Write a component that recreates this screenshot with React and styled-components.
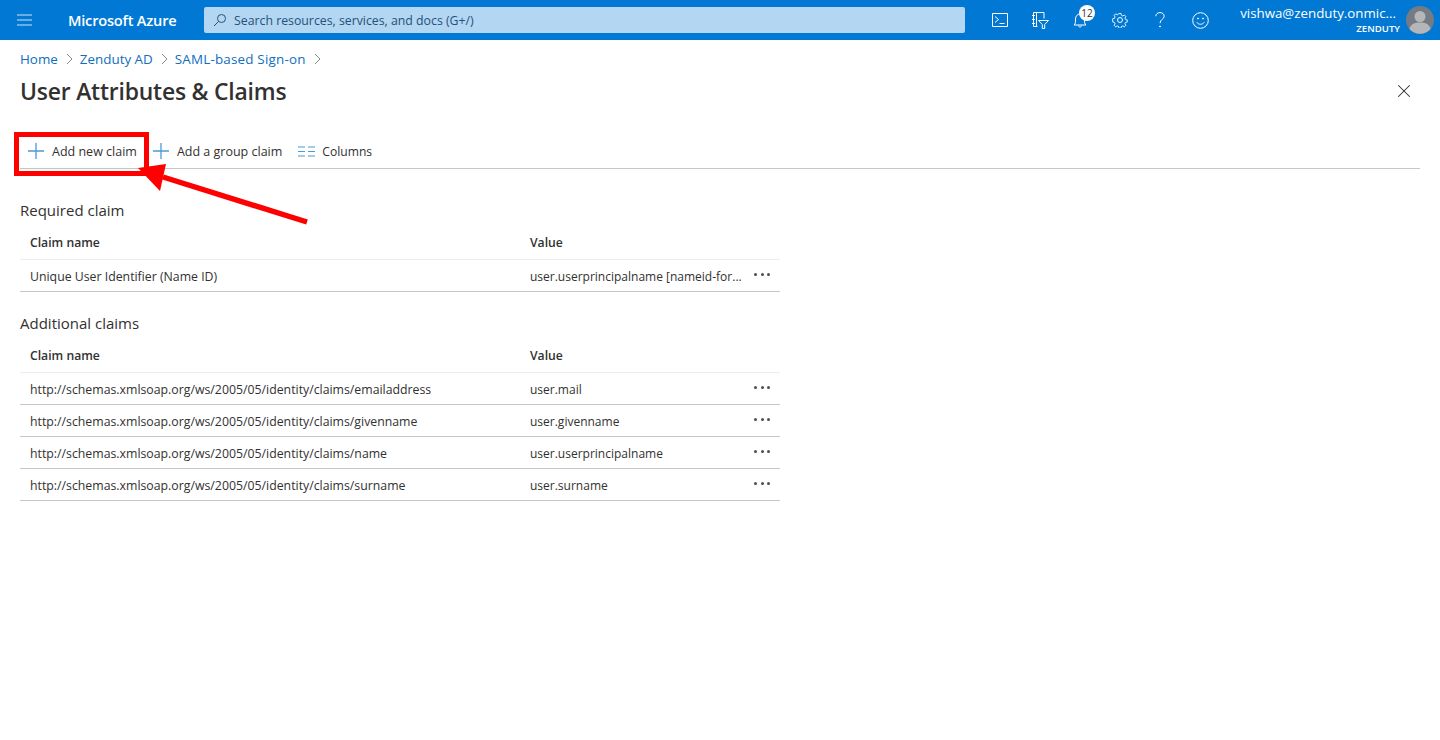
import styled, { createGlobalStyle } from "styled-components";
import { X } from "lucide-react";

const GlobalStyle = createGlobalStyle`
  html, body {
    margin: 0;
    padding: 0;
    background: #fff;
    font-family: "Open Sans", "Noto Sans", "Liberation Sans", sans-serif;
    color: #323130;
  }
`;

const Page = styled.div`
  position: relative;
  width: 1440px;
  height: 740px;
  overflow: hidden;
`;

const TopBar = styled.header`
  display: flex;
  align-items: center;
  height: 40px;
  background: #0078d4;
  color: #fff;
`;

const MenuButton = styled.div`
  display: flex;
  justify-content: center;
  width: 49px;
`;

const Brand = styled.div`
  width: 136px;
  padding-left: 19px;
  box-sizing: border-box;
  font-size: 14.6px;
  font-weight: 600;
  letter-spacing: -0.2px;
  white-space: nowrap;
`;

const SearchBox = styled.div`
  display: flex;
  align-items: center;
  gap: 7px;
  width: 761px;
  height: 26px;
  margin-left: 19px;
  padding-left: 9px;
  box-sizing: border-box;
  background: #b3d6f2;
  border-radius: 2px;
  color: #24527a;
  font-size: 12.3px;
`;

const IconRow = styled.div`
  display: flex;
  margin-left: 15px;
`;

const IconCell = styled.div`
  position: relative;
  display: flex;
  align-items: center;
  justify-content: center;
  width: 40px;
  height: 40px;
`;

const Badge = styled.span`
  position: absolute;
  top: 5px;
  left: 19px;
  width: 16px;
  height: 16px;
  border-radius: 50%;
  background: #fff;
  color: #323130;
  font-size: 10px;
  line-height: 16px;
  text-align: center;
`;

const Account = styled.div`
  display: flex;
  flex-direction: column;
  align-items: flex-end;
  width: 171px;
  margin-left: 10px;
  padding-top: 1px;
`;

const AccountName = styled.div`
  padding-right: 5px;
  font-size: 13.3px;
  line-height: 17px;
  white-space: nowrap;
`;

const Tenant = styled.div`
  padding-right: 1px;
  font-size: 9.6px;
  font-weight: 600;
  line-height: 14px;
`;

const Avatar = styled.div`
  margin-left: 5px;
  width: 28px;
  height: 28px;
`;

const Content = styled.main`
  padding: 0 20px;
`;

const Breadcrumb = styled.nav`
  display: flex;
  align-items: center;
  height: 38px;
  font-size: 13.4px;
  color: #106ebe;
`;

const Crumb = styled.span`
  letter-spacing: ${(p) => p.$track || 0}px;
  white-space: nowrap;
`;

const Chevron = styled.svg`
  width: 8px;
  height: 10px;
  margin: 0 7px;
  fill: none;
  stroke: #8a8886;
  stroke-width: 1;
`;

const TitleRow = styled.div`
  display: flex;
  align-items: center;
  justify-content: space-between;
  height: 30px;
  margin-top: -2px;
  padding-right: 5px;
`;

const Title = styled.h1`
  margin: 0;
  font-size: 22.9px;
  font-weight: 600;
  letter-spacing: -0.2px;
  color: #323130;
`;

const Toolbar = styled.div`
  display: flex;
  align-items: center;
  height: 34px;
  margin-top: 28px;
  padding: 0 0 0 8px;
  border-bottom: 1px solid #c8c6c4;
`;

const ToolButton = styled.div`
  display: flex;
  align-items: center;
  gap: ${(p) => p.$gap || 8}px;
  margin-right: ${(p) => p.$after || 0}px;
  font-size: ${(p) => p.$size || 12.5}px;
  color: #323130;
  white-space: nowrap;
`;

const Section = styled.section`
  width: 760px;
  margin-top: ${(p) => p.$top}px;
`;

const SectionTitle = styled.h2`
  margin: 0;
  height: 20px;
  font-size: 15px;
  line-height: 20px;
  font-weight: 400;
  color: #323130;
`;

const HeaderRow = styled.div`
  display: grid;
  grid-template-columns: 500px 260px;
  align-items: center;
  height: 34px;
  margin-top: 5px;
  padding-left: 10px;
  border-bottom: 1px solid #edebe9;
  font-size: 12.2px;
  font-weight: 600;
`;

const Row = styled.div`
  display: grid;
  grid-template-columns: 500px 214px 1fr;
  align-items: center;
  height: 31px;
  padding-left: 10px;
  border-bottom: 1px solid #c8c6c4;
  white-space: nowrap;
`;

const Cell = styled.div`
  padding-top: 2px;
  font-size: ${(p) => p.$size}px;
  white-space: nowrap;
`;

const More = styled.div`
  display: flex;
  gap: 3.5px;
  margin: -2px 0 0 10px;
`;

const Dot = styled.span`
  width: 3px;
  height: 3px;
  border-radius: 50%;
  background: #504e4c;
`;

const Annotation = styled.div`
  position: absolute;
  top: 132px;
  left: 14px;
  width: 135px;
  height: 44px;
  box-sizing: border-box;
  border: 5px solid #fe0000;
`;

const ArrowSvg = styled.svg`
  position: absolute;
  top: 160px;
  left: 130px;
  width: 190px;
  height: 75px;
`;

const requiredRows = [
  ["Unique User Identifier (Name ID)", "user.userprincipalname [nameid-for..."],
];

const additionalRows = [
  ["http://schemas.xmlsoap.org/ws/2005/05/identity/claims/emailaddress", "user.mail"],
  ["http://schemas.xmlsoap.org/ws/2005/05/identity/claims/givenname", "user.givenname"],
  ["http://schemas.xmlsoap.org/ws/2005/05/identity/claims/name", "user.userprincipalname"],
  ["http://schemas.xmlsoap.org/ws/2005/05/identity/claims/surname", "user.surname"],
];

const Plus = () => (
  <svg width="16" height="16" viewBox="0 0 16 16" stroke="#4a9ad4" strokeWidth="1.3">
    <path d="M8 0v16M0 8h16" />
  </svg>
);

const ClaimsTable = ({ rows }) => (
  <>
    <HeaderRow>
      <span>Claim name</span>
      <span>Value</span>
    </HeaderRow>
    {rows.map(([name, value]) => (
      <Row key={name}>
        <Cell $size={12.3}>{name}</Cell>
        <Cell $size={12}>{value}</Cell>
        <More>
          <Dot />
          <Dot />
          <Dot />
        </More>
      </Row>
    ))}
  </>
);

export default function App() {
  return (
    <Page>
      <GlobalStyle />
      <TopBar>
        <MenuButton>
          <svg width="15" height="12" viewBox="0 0 15 12" stroke="#cfe4f6" strokeWidth="1.2">
            <path d="M0 1h15M0 6h15M0 11h15" />
          </svg>
        </MenuButton>
        <Brand>Microsoft Azure</Brand>
        <SearchBox>
          <svg width="14" height="14" viewBox="0 0 14 14" fill="none" stroke="#24527a" strokeWidth="1">
            <circle cx="8.5" cy="5.5" r="4" />
            <path d="M5.5 8.5L1 13" />
          </svg>
          Search resources, services, and docs (G+/)
        </SearchBox>
        <IconRow>
          <IconCell>
            <svg width="16" height="14" viewBox="0 0 16 14" fill="none" stroke="#fff" strokeWidth="1">
              <path d="M.5.5h15v13H.5zM3 3.5l3.5 3-3.5 3M7.5 10.500h5" />
            </svg>
          </IconCell>
          <IconCell>
            <svg width="18" height="17" viewBox="0 0 18 17" fill="none" stroke="#fff" strokeWidth="1">
              <path d="M2.500.5h10.500v6M6.500 14.500h-4V.5M5.500.5v14M1 3.500h3M1 7.500h3M1 11.500h3M7.500 8.500h10l-3.800 4v4h-2.400v-4z" />
            </svg>
          </IconCell>
          <IconCell>
            <svg width="14" height="16" viewBox="0 0 14 16" fill="none" stroke="#fff" strokeWidth="1">
              <path d="M1 13c1.500-1 1.500-3 1.500-6S4.500 2 7 2s4.500 2 4.500 5 0 5 1.500 6zM5.500 13.500c0 2 3 2 3 0" />
            </svg>
            <Badge>12</Badge>
          </IconCell>
          <IconCell>
            <svg width="16" height="16" viewBox="0 0 16 16" fill="none" stroke="#fff" strokeWidth="1">
              <circle cx="8" cy="8" r="2.500" />
              <path d="M6.800.8h2.400l.4 2 1.500.7 1.800-1 1.600 1.700-1 1.700.6 1.500 2 .5v2.300l-2 .5-.6 1.500 1 1.700-1.600 1.700-1.800-1-1.500.6-.4 2H6.800l-.4-2-1.500-.6-1.800 1-1.600-1.700 1-1.700-.6-1.500-2-.5V6.600l2-.5.6-1.500-1-1.700 1.600-1.700 1.800 1 1.500-.7z" transform="translate(.8 .8) scale(.9)" />
            </svg>
          </IconCell>
          <IconCell>
            <svg width="10" height="16" viewBox="0 0 10 16" fill="none" stroke="#fff" strokeWidth="1">
              <path d="M.8 4.200C.8 2 2.600.6 5 .6s4.200 1.500 4.200 3.600c0 3-4.200 3.300-4.200 7" />
              <circle cx="5" cy="14.500" r=".5" fill="#fff" />
            </svg>
          </IconCell>
          <IconCell>
            <svg width="17" height="17" viewBox="0 0 17 17" fill="none" stroke="#fff" strokeWidth="1">
              <circle cx="8.500" cy="8.500" r="7.800" />
              <path d="M4.800 10.300c1.500 2.600 5.900 2.600 7.400 0" />
              <circle cx="6" cy="6.500" r=".5" fill="#fff" />
              <circle cx="11" cy="6.500" r=".5" fill="#fff" />
            </svg>
          </IconCell>
        </IconRow>
        <Account>
          <AccountName>vishwa@zenduty.onmic...</AccountName>
          <Tenant>ZENDUTY</Tenant>
        </Account>
        <Avatar>
          <svg width="28" height="28" viewBox="0 0 28 28">
            <circle cx="14" cy="14" r="14" fill="#757b85" />
            <circle cx="14" cy="10.500" r="5.500" fill="#b4b6ba" />
            <path d="M3.500 23c1-5 5-6.500 10.500-6.500S23.500 18 24.500 23A14 14 0 0 1 3.500 23z" fill="#b4b6ba" />
          </svg>
        </Avatar>
      </TopBar>

      <Content>
        <Breadcrumb>
          <Crumb>Home</Crumb>
          <Chevron viewBox="0 0 8 10"><path d="M2 0l5 5-5 5" /></Chevron>
          <Crumb>Zenduty AD</Crumb>
          <Chevron viewBox="0 0 8 10"><path d="M2 0l5 5-5 5" /></Chevron>
          <Crumb $track={0.2}>SAML-based Sign-on</Crumb>
          <Chevron viewBox="0 0 8 10"><path d="M2 0l5 5-5 5" /></Chevron>
        </Breadcrumb>
        <TitleRow>
          <Title>User Attributes &amp; Claims</Title>
          <X size={22} strokeWidth={1.1} color="#323130" />
        </TitleRow>
        <Toolbar>
          <ToolButton $after={16}>
            <Plus />
            Add new claim
          </ToolButton>
          <ToolButton $after={16}>
            <Plus />
            Add a group claim
          </ToolButton>
          <ToolButton $gap={7} $size={12.1}>
            <svg width="17" height="11" viewBox="0 0 17 11" stroke="#4a9ad4" strokeWidth="1.2">
              <path d="M0 1h7M0 5.500h7M0 10h7M10 1h7M10 5.500h7M10 10h7" />
            </svg>
            Columns
          </ToolButton>
        </Toolbar>
        <Section $top={31}>
          <SectionTitle>Required claim</SectionTitle>
          <ClaimsTable rows={requiredRows} />
        </Section>
        <Section $top={21}>
          <SectionTitle>Additional claims</SectionTitle>
          <ClaimsTable rows={additionalRows} />
        </Section>
      </Content>

      <Annotation />
      <ArrowSvg viewBox="0 0 190 75">
        <path d="M177 62L33 17" stroke="#fe0000" strokeWidth="5.500" />
        <path d="M8 8L36 4L30 31z" fill="#fe0000" />
      </ArrowSvg>
    </Page>
  );
}
